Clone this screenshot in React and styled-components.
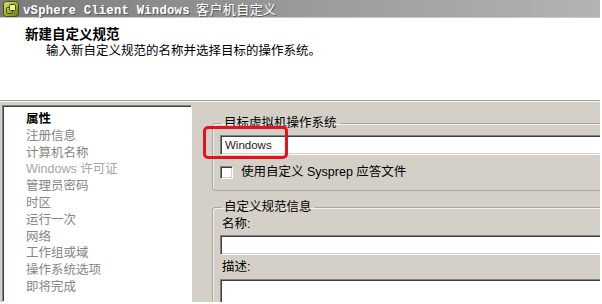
import React from 'react';
import styled, { createGlobalStyle } from 'styled-components';

const GlobalStyle = createGlobalStyle`
  html, body {
    margin: 0;
    padding: 0;
    background: #ffffff;
    overflow: hidden;
  }
  * {
    box-sizing: border-box;
  }
`;

const UI_FONT = `"Liberation Sans", "Noto Sans CJK SC", sans-serif`;

const Window = styled.div`
  width: 600px;
  height: 302px;
  display: flex;
  flex-direction: column;
  overflow: hidden;
  background: #d4d0c8;
  font-family: ${UI_FONT};
  font-size: 12.5px;
  color: #000;
`;

const TitleBar = styled.div`
  height: 18px;
  flex: none;
  display: flex;
  align-items: center;
  gap: 4px;
  padding-left: 3px;
  background: linear-gradient(to right, #7b7b7b 0%, #979797 45%, #b3b3b3 100%);
  border-bottom: 1px solid #c9c9c9;
`;

const TitleText = styled.span`
  color: #ffffff;
  font-family: "Liberation Mono", "Noto Sans CJK SC", monospace;
  font-weight: bold;
  font-size: 12.3px;
  letter-spacing: 0.2px;
  text-shadow: 1px 1px 0 #5a5a5a;
  white-space: nowrap;
`;

const TitleCjk = styled.span`
  font-family: "Noto Sans CJK SC", sans-serif;
  font-size: 13px;
  font-weight: normal;
  letter-spacing: 0.4px;
  margin-left: 3px;
`;

const Header = styled.div`
  height: 83px;
  flex: none;
  background: #ffffff;
  padding: 8px 0 0 25px;
  border-bottom: 1px solid #a4a09a;
  box-shadow: 0 1px 0 #f4f2ee;
`;

const HeaderTitle = styled.div`
  font-weight: bold;
  font-size: 13.5px;
  line-height: 17px;
`;

const HeaderSub = styled.div`
  padding-left: 21px;
  font-size: 12.5px;
  line-height: 17px;
`;

const Body = styled.div`
  flex: 1;
  display: flex;
  padding: 4px 0 0 2px;
  min-height: 0;
`;

const StepList = styled.ul`
  width: 190px;
  flex: none;
  margin: 0;
  padding: 5px 0 0 23px;
  list-style: none;
  background: #ffffff;
  border: 1px solid;
  border-color: #808080 #ffffff #ffffff #808080;
  box-shadow: inset 1px 1px 0 #404040;
`;

const Step = styled.li`
  font-size: 12.5px;
  line-height: 16.8px;
  white-space: nowrap;
  color: ${(p) => (p.$current ? '#000000' : p.$faint ? '#a6a6a6' : '#858585')};
  font-weight: ${(p) => (p.$current ? 'bold' : 'normal')};
`;

const RightPane = styled.div`
  width: 400px;
  flex: none;
  margin-left: 20px;
  padding-top: 10px;
  display: flex;
  flex-direction: column;
  gap: 8px;
`;

const Group = styled.fieldset`
  margin: 0;
  padding: ${(p) => p.$pad || '4px 8px 10px 7px'};
  border: 1px solid #aaa69e;
  border-radius: 3px;
  box-shadow: inset 1px 1px 0 #f2f0ec;
  display: flex;
  flex-direction: column;
  min-width: 0;
  flex: ${(p) => (p.$grow ? 1 : 'none')};
`;

const Legend = styled.legend`
  padding: 0 3px;
  margin-left: 1px;
  font-size: 12.5px;
  line-height: 16px;
`;

const InputWrap = styled.div`
  position: relative;
`;

const TextBox = styled.div`
  height: ${(p) => p.$h || 20}px;
  background: #ffffff;
  border: 1px solid;
  border-color: #808080 #ffffff #ffffff #808080;
  box-shadow: inset 1px 1px 0 #404040, inset -1px -1px 0 #d4d0c8;
  padding: 0 0 0 4px;
  font-size: 11.5px;
  line-height: 19px;
  color: #222;
  margin-top: ${(p) => p.$mt || 0}px;
`;

const Highlight = styled.div`
  position: absolute;
  left: -17px;
  top: -9px;
  width: 85px;
  height: 33px;
  border: 3px solid #ea101b;
  border-radius: 5px;
  pointer-events: none;
`;

const CheckRow = styled.label`
  display: flex;
  align-items: center;
  gap: 8px;
  margin-top: 9px;
  height: 16px;
  line-height: 16px;
  white-space: nowrap;
`;

const CheckBox = styled.span`
  width: 13px;
  height: 13px;
  flex: none;
  background: #ffffff;
  border: 1px solid;
  border-color: #808080 #ffffff #ffffff #808080;
  box-shadow: inset 1px 1px 0 #404040, inset -1px -1px 0 #d4d0c8;
`;

const FieldLabel = styled.div`
  line-height: 16px;
  margin-top: ${(p) => p.$mt || 0}px;
  padding-left: 2px;
`;

function VSphereIcon() {
  return (
    <svg width="16" height="16" viewBox="0 0 16 16">
      <defs>
        <linearGradient id="vs" x1="0" y1="0" x2="1" y2="1">
          <stop offset="0" stopColor="#e0e070" />
          <stop offset="0.5" stopColor="#a6b828" />
          <stop offset="1" stopColor="#5e7410" />
        </linearGradient>
      </defs>
      <rect x="0.5" y="0.5" width="15" height="15" rx="3" fill="url(#vs)" stroke="#3f4c0e" />
      <rect x="3.5" y="6.5" width="6" height="6" rx="1" fill="none" stroke="#3a4410" />
      <rect x="6.5" y="3.5" width="6" height="6" rx="1" fill="#f0f0a0" stroke="#3a4410" />
    </svg>
  );
}

const steps = [
  '属性',
  '注册信息',
  '计算机名称',
  'Windows 许可证',
  '管理员密码',
  '时区',
  '运行一次',
  '网络',
  '工作组或域',
  '操作系统选项',
  '即将完成',
];

export default function App() {
  return (
    <>
      <GlobalStyle />
      <Window>
        <TitleBar>
          <VSphereIcon />
          <TitleText>
            vSphere Client Windows<TitleCjk> 客户机自定义</TitleCjk>
          </TitleText>
        </TitleBar>

        <Header>
          <HeaderTitle>新建自定义规范</HeaderTitle>
          <HeaderSub>输入新自定义规范的名称并选择目标的操作系统。</HeaderSub>
        </Header>

        <Body>
          <StepList>
            {steps.map((s, i) => (
              <Step key={s} $current={i === 0} $faint={i === 3}>
                {s}
              </Step>
            ))}
          </StepList>

          <RightPane>
            <Group>
              <Legend>目标虚拟机操作系统</Legend>
              <InputWrap>
                <TextBox>Windows</TextBox>
                <Highlight />
              </InputWrap>
              <CheckRow>
                <CheckBox />
                使用自定义 Sysprep 应答文件
              </CheckRow>
            </Group>

            <Group $grow $pad="1px 8px 0 7px">
              <Legend>自定义规范信息</Legend>
              <FieldLabel>名称:</FieldLabel>
              <TextBox $mt={3} />
              <FieldLabel $mt={4}>描述:</FieldLabel>
              <TextBox $mt={4} $h={60} />
            </Group>
          </RightPane>
        </Body>
      </Window>
    </>
  );
}
